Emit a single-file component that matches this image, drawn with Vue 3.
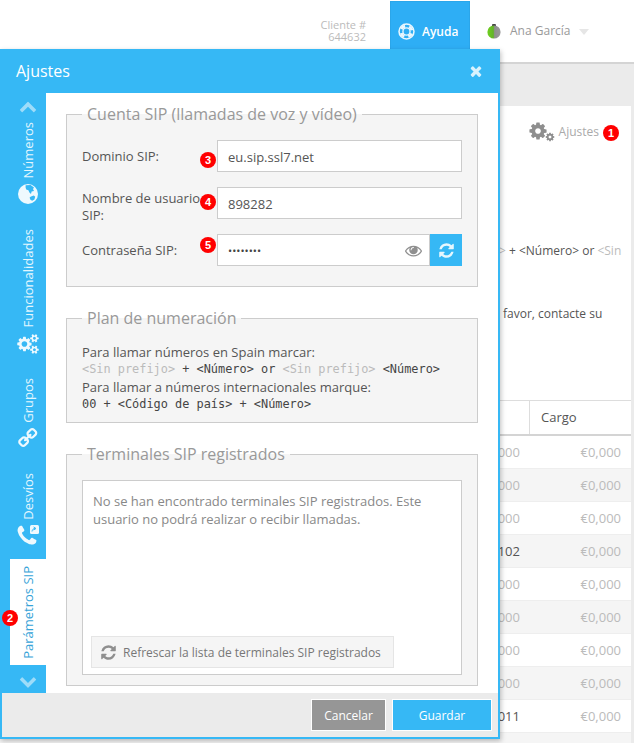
<script setup>
const rows = ['000','000','000','102','000','000','000','000','011']
const refresh = 'M1639 1056q0 5-1 7-64 268-268 434.5t-478 166.5q-146 0-282.5-55t-243.5-157l-129 129q-19 19-45 19t-45-19-19-45v-448q0-26 19-45t45-19h448q26 0 45 19t19 45-19 45l-137 137q71 66 161 102t187 36q134 0 250-65t186-179q11-17 53-117 8-23 30-23h192q13 0 22.5 9.5t9.5 22.5zm25-800v448q0 26-19 45t-45 19h-448q-26 0-45-19t-19-45 19-45l138-138q-148-137-349-137-134 0-250 65t-186 179q-11 17-53 117-8 23-30 23h-199q-13 0-22.5-9.5t-9.5-22.5v-7q65-268 270-434.5t480-166.5q146 0 284 55.5t245 156.5l130-129q19-19 45-19t45 19 19 45z'
const cog = 'M1152 896q0-106-75-181t-181-75-181 75-75 181 75 181 181 75 181-75 75-181zm512-109v222q0 12-8 23t-20 13l-185 28q-19 54-39 91 35 50 107 138 10 12 10 25t-9 23q-27 37-99 108t-94 71q-12 0-26-9l-138-108q-44 23-91 38-16 136-29 186-7 28-36 28h-222q-14 0-24.5-8.5t-11.5-21.5l-28-184q-49-16-90-37l-141 107q-10 9-25 9-14 0-25-11-126-114-165-168-7-10-7-23 0-12 8-23 15-21 51-66.5t54-70.5q-27-50-41-99l-183-27q-13-2-21-12.5t-8-23.5v-222q0-12 8-23t19-13l186-28q14-46 39-92-40-57-107-138-10-12-10-24 0-10 9-23 26-36 98.5-107.5t94.5-71.5q13 0 26 10l138 107q44-23 91-38 16-136 29-186 7-28 36-28h222q14 0 24.5 8.5t11.5 21.5l28 184q49 16 90 37l142-107q9-9 24-9 13 0 25 10 129 119 165 170 7 8 7 22 0 12-8 23-15 21-51 66.5t-54 70.5q26 50 41 98l183 28q13 2 21 12.5t8 23.5z'
</script>

<template>
  <div class="page">
    <header class="top">
      <div class="client">Cliente #<br />644632</div>
      <div class="help">
        <svg class="ring" viewBox="0 0 20 20" width="17" height="17">
          <circle cx="10" cy="10" r="8.8" fill="none" stroke="#eaf7fe" stroke-width="1.8" />
          <circle cx="10" cy="10" r="4.2" fill="none" stroke="#eaf7fe" stroke-width="1.6" />
          <circle cx="10" cy="10" r="6.5" fill="none" stroke="#eaf7fe" stroke-width="3.4" stroke-dasharray="5.2 5" stroke-dashoffset="-2.5" />
        </svg>
        <span>Ayuda</span>
      </div>
      <div class="user">
        <svg class="ball" viewBox="0 0 16 16" width="16" height="16">
          <defs>
            <linearGradient id="ballg" x1="0" x2="1" y1="0" y2="0">
              <stop offset="0" stop-color="#6fd01e" />
              <stop offset=".45" stop-color="#63b32a" />
              <stop offset=".55" stop-color="#8f8f8f" />
              <stop offset="1" stop-color="#9a9a9a" />
            </linearGradient>
          </defs>
          <path d="M6.4 1h3.2l.6 2.4H5.8z" fill="#444" />
          <circle cx="8" cy="9" r="6.6" fill="url(#ballg)" />
        </svg>
        <span>Ana García</span>
        <i class="caret"></i>
      </div>
    </header>

    <main class="card">
      <div class="settings-link">
        <svg class="cogs" viewBox="0 0 26 20" width="26" height="20">
          <svg x="-1" y="-1" width="20" height="20" viewBox="0 0 1792 1792"><path :d="cog" fill="#8e8e8e" /></svg>
          <svg x="16" y="10" width="10" height="10" viewBox="0 0 1792 1792"><path :d="cog" fill="#8e8e8e" /></svg>
        </svg>
        <span>Ajustes</span>
        <b class="badge">1</b>
      </div>
      <p class="bg-a"><span>&gt;</span> + &lt;Número&gt; or <span>&lt;Sin</span></p>
      <p class="bg-b">favor, contacte su</p>
      <div class="table">
        <div class="thead"><div class="c1"></div><div class="c2">Cargo</div></div>
        <div v-for="(r, i) in rows" :key="i" class="trow">
          <div class="c1" :class="{ dark: r !== '000' }">{{ r }}</div>
          <div class="c2">€0,000</div>
        </div>
        <div class="trow"></div>
      </div>
    </main>

    <section class="modal">
      <div class="m-head">
        <span>Ajustes</span>
        <svg viewBox="0 0 1792 1792" width="16" height="16"><path fill="#d9f2fd" d="M1490 1322q0 40-28 68l-136 136q-28 28-68 28t-68-28l-294-294-294 294q-28 28-68 28t-68-28l-136-136q-28-28-28-68t28-68l294-294-294-294q-28-28-28-68t28-68l136-136q28-28 68-28t68 28l294 294 294-294q28-28 68-28t68 28l136 136q28 28 28 68t-28 68l-294 294 294 294q28 28 28 68z" /></svg>
      </div>
      <div class="m-body">
        <nav class="rail">
          <svg class="chev up" viewBox="0 0 1792 1792" width="18" height="18"><path fill="#9edcf9" d="M1683 1331l-166 165q-19 19-45 19t-45-19l-531-531-531 531q-19 19-45 19t-45-19l-166-165q-19-19-19-45.5t19-45.5l742-741q19-19 45-19t45 19l742 741q19 19 19 45.5t-19 45.5z" /></svg>

          <div class="tab t1">
            <span class="vtext">Números</span>
            <svg viewBox="0 0 20 20" width="20" height="20">
              <circle cx="10" cy="10" r="10" fill="#eef9fe" />
              <path fill="#36b8f5" d="M7.6 1.2l5-.2 3.4 2.4-1 1.6 1 2-2.4.4-.6 2.6-1.6-1.4-1-2.4-2.2-.6-.6-2.2z" />
              <path fill="#36b8f5" d="M13 12.4l2.8-.8 1.4 1.2-.8 2.6-2.2 1.4-1.8-1-.8-2.2z" />
            </svg>
          </div>

          <div class="tab t2">
            <span class="vtext">Funcionalidades</span>
            <svg viewBox="0 0 1920 1792" width="22" height="20"><path fill="#eef9fe" d="M896 896q0-106-75-181t-181-75-181 75-75 181 75 181 181 75 181-75 75-181zm768 512q0-52-38-90t-90-38-90 38-38 90q0 53 37.5 90.5t90.5 37.5 90.5-37.5 37.5-90.5zm0-1024q0-52-38-90t-90-38-90 38-38 90q0 53 37.5 90.5t90.5 37.5 90.5-37.5 37.5-90.5zm-384 421v185q0 10-7 19.5t-16 10.5l-155 24q-11 35-32 76 34 48 90 115 7 11 7 20 0 12-7 19-23 30-82.5 89.5t-78.5 59.5q-11 0-21-7l-115-90q-37 19-77 31-11 108-23 155-7 24-30 24h-186q-11 0-20-7.5t-10-17.5l-23-153q-34-10-75-31l-118 89q-7 7-20 7-11 0-21-8-144-133-144-160 0-9 7-19 10-14 41-53t47-61q-23-44-35-82l-152-24q-10-1-17-9.5t-7-19.5v-185q0-10 7-19.5t16-10.5l155-24q11-35 32-76-34-48-90-115-7-11-7-20 0-12 7-20 22-30 82-89t79-59q11 0 21 7l115 90q34-18 77-32 11-108 23-154 7-24 30-24h186q11 0 20 7.5t10 17.5l23 153q34 10 75 31l118-89q8-7 20-7 11 0 21 8 144 133 144 160 0 8-7 19-12 16-42 54t-45 60q23 48 34 82l152 23q10 2 17 10.5t7 19.5zm640 533v140q0 16-149 31-12 27-30 52 51 113 51 138 0 4-4 7-122 71-124 71-8 0-46-47t-52-68q-20 2-30 2t-30-2q-14 21-52 68t-46 47q-2 0-124-71-4-3-4-7 0-25 51-138-18-25-30-52-149-15-149-31v-140q0-16 149-31 13-29 30-52-51-113-51-138 0-4 4-7 4-2 35-20t59-34 30-16q8 0 46 46.5t52 67.5q20-2 30-2t30 2q51-71 92-112l6-2q4 0 124 70 4 3 4 7 0 25-51 138 17 23 30 52 149 15 149 31zm0-1024v140q0 16-149 31-12 27-30 52 51 113 51 138 0 4-4 7-122 71-124 71-8 0-46-47t-52-68q-20 2-30 2t-30-2q-14 21-52 68t-46 47q-2 0-124-71-4-3-4-7 0-25 51-138-18-25-30-52-149-15-149-31v-140q0-16 149-31 13-29 30-52-51-113-51-138 0-4 4-7 4-2 35-20t59-34 30-16q8 0 46 46.5t52 67.5q20-2 30-2t30 2q51-71 92-112l6-2q4 0 124 70 4 3 4 7 0 25-51 138 17 23 30 52 149 15 149 31z" /></svg>
          </div>

          <div class="tab t3">
            <span class="vtext">Grupos</span>
            <svg viewBox="0 0 1792 1792" width="21" height="21"><path fill="#eef9fe" transform="rotate(-90 896 896)" d="M1520 1216q0-40-28-68l-208-208q-28-28-68-28-42 0-72 32 3 3 19 18.5t21.5 21.5 15 19 13 25.5 3.5 27.5q0 40-28 68t-68 28q-15 0-27.5-3.5t-25.5-13-19-15-21.5-21.5-18.5-19q-33 31-33 73 0 40 28 68l206 207q27 27 68 27 40 0 68-26l147-146q28-28 28-67zm-703-705q0-40-28-68l-206-207q-28-28-68-28-39 0-68 27l-147 146q-28 28-28 67 0 40 28 68l208 208q27 27 68 27 42 0 72-31-3-3-19-18.5t-21.5-21.5-15-19-13-25.5-3.5-27.5q0-40 28-68t68-28q15 0 27.5 3.5t25.5 13 19 15 21.5 21.5 18.5 19q33-31 33-73zm895 705q0 120-85 203l-147 146q-83 83-203 83-121 0-204-85l-206-207q-83-83-83-203 0-123 88-209l-88-88q-86 88-208 88-120 0-204-84l-208-208q-84-84-84-204t85-203l147-146q83-83 203-83 121 0 204 85l206 207q83 83 83 203 0 123-88 209l88 88q86-88 208-88 120 0 204 84l208 208q84 84 84 204z" /></svg>
          </div>

          <div class="tab t4">
            <span class="vtext">Desvíos</span>
            <svg viewBox="0 0 22 22" width="22" height="22">
              <svg x="-2" y="-1" width="24" height="24" viewBox="0 0 1792 1792"><path fill="#eef9fe" d="M1600 1240q0 27-10 70.5t-21 68.5q-21 50-122 106-94 51-186 51-27 0-53-3.5t-57.5-12.5-47-14.5-55.5-20.5-49-18q-98-35-175-83-127-79-264-216t-216-264q-48-77-83-175-3-9-18-49t-20.5-55.5-14.5-47-12.5-57.5-3.5-53q0-92 51-186 56-101 106-122 25-11 68.5-21t70.5-10q14 0 21 3 18 6 53 76 11 19 30 54t35 63.5 31 53.5q3 4 17.5 25t21.5 35.5 7 28.5q0 20-28.5 50t-62 55-62 53-28.5 46q0 9 5 22.5t8.5 20.5 14 24 11.5 19q76 137 174 235t235 174q2 1 19 11.5t24 14 20.5 8.5 22.5 5q18 0 46-28.5t53-62 55-62 50-28.5q14 0 28.5 7t35.5 21.5 25 17.5q25 15 53.5 31t63.5 35 54 30q70 35 76 53 3 7 3 21z" /></svg>
              <rect x="13" y="0" width="9" height="9" rx="1.5" fill="#eef9fe" />
              <path d="M15 6.5c.3-2 1.4-3 3-3M16.6 2l2.4 1.5-2.4 1.5" fill="none" stroke="#36b8f5" stroke-width="1" />
            </svg>
          </div>

          <div class="tab active">
            <span class="vtext">Parámetros SIP</span>
            <b class="badge b2">2</b>
          </div>

          <svg class="chev down" viewBox="0 0 1792 1792" width="18" height="18"><path fill="#9edcf9" d="M1683 808l-742 741q-19 19-45 19t-45-19l-742-741q-19-19-19-45.5t19-45.5l166-165q19-19 45-19t45 19l531 531 531-531q19-19 45-19t45 19l166 165q19 19 19 45.5t-19 45.5z" /></svg>
        </nav>

        <div class="content">
          <fieldset class="fs f1">
            <legend>Cuenta SIP (llamadas de voz y vídeo)</legend>
            <div class="row">
              <label>Dominio SIP:</label>
              <div class="field">eu.sip.ssl7.net</div>
              <b class="badge bf b3">3</b>
            </div>
            <div class="row">
              <label class="two">Nombre de usuario SIP:</label>
              <div class="field">898282</div>
              <b class="badge bf b4">4</b>
            </div>
            <div class="row">
              <label>Contraseña SIP:</label>
              <div class="field pw">
                <span class="dots">••••••••</span>
                <svg viewBox="0 0 1792 1792" width="17" height="17"><path fill="#8f8f8f" d="M1664 960q-152-236-381-353 61 104 61 225 0 185-131.5 316.5t-316.5 131.5-316.5-131.5-131.5-316.5q0-121 61-225-229 117-381 353 133 205 333.5 326.5t434.5 121.5 434.5-121.5 333.5-326.5zm-720-384q0-20-14-34t-34-14q-125 0-214.5 89.5t-89.5 214.5q0 20 14 34t34 14 34-14 14-34q0-86 61-147t147-61q20 0 34-14t14-34zm848 384q0 34-20 69-140 230-376.5 368.5t-499.5 138.5-499.5-139-376.5-368q-20-35-20-69t20-69q140-229 376.5-368t499.5-139 499.5 139 376.5 368q20 35 20 69z" /></svg>
              </div>
              <div class="gen">
                <svg viewBox="0 0 1792 1792" width="17" height="17"><path fill="#e6f7fe" :d="refresh" /></svg>
              </div>
              <b class="badge bf b5">5</b>
            </div>
          </fieldset>

          <fieldset class="fs f2">
            <legend>Plan de numeración</legend>
            <div class="plan">
              <div>Para llamar números en Spain marcar:</div>
              <div class="mono"><span>&lt;Sin prefijo&gt;</span> + &lt;Número&gt; or <span>&lt;Sin prefijo&gt;</span> &lt;Número&gt;</div>
              <div>Para llamar a números internacionales marque:</div>
              <div class="mono">00 + &lt;Código de país&gt; + &lt;Número&gt;</div>
            </div>
          </fieldset>

          <fieldset class="fs f3">
            <legend>Terminales SIP registrados</legend>
            <div class="box">
              <p>No se han encontrado terminales SIP registrados. Este usuario no podrá realizar o recibir llamadas.</p>
              <div class="refresh">
                <svg viewBox="0 0 1792 1792" width="17" height="17"><path fill="#8f8f8f" :d="refresh" /></svg>
                <span>Refrescar la lista de terminales SIP registrados</span>
              </div>
            </div>
          </fieldset>
        </div>
      </div>
      <div class="m-foot">
        <button class="cancel">Cancelar</button>
        <button class="save">Guardar</button>
      </div>
    </section>
  </div>
</template>

<style scoped>
.page {
  position: relative;
  width: 634px;
  height: 743px;
  overflow: hidden;
  background: #ebebeb;
  font-family: "Open Sans", sans-serif;
  font-size: 13px;
  color: #555;
}
.top {
  height: 62px;
  background: #fff;
  border-bottom: 2px solid #d4d4d4;
  display: flex;
  align-items: flex-start;
  justify-content: flex-end;
}
.client {
  margin-top: 19px;
  margin-right: 24px;
  text-align: right;
  font-size: 11px;
  line-height: 12px;
  color: #bbb;
}
.help {
  width: 80px;
  height: 61px;
  margin-top: 1px;
  box-sizing: border-box;
  background: #2eaef5;
  border: 1px solid #2ba6ea;
  display: flex;
  align-items: flex-start;
  padding: 21px 0 0 7px;
  gap: 7px;
  color: #fff;
  font-size: 12px;
  font-weight: 600;
  line-height: 17px;
}
.help .ring { flex: none; }
.user {
  width: 164px;
  display: flex;
  align-items: center;
  height: 17px;
  margin-top: 22px;
  padding-left: 16px;
  box-sizing: border-box;
  font-size: 12px;
  color: #999;
}
.ball { margin-right: 8px; flex: none; }
.caret {
  width: 0;
  height: 0;
  margin-left: 9px;
  margin-top: 2px;
  border: 5px solid transparent;
  border-top: 6px solid #e6e6e6;
  border-bottom: 0;
}
.card {
  position: absolute;
  top: 106px;
  left: 0;
  width: 631px;
  height: 637px;
  background: #fff;
}
.settings-link {
  position: absolute;
  right: 12px;
  top: 16px;
  display: flex;
  align-items: center;
  font-size: 12px;
  line-height: 20px;
  color: #aaa;
}
.cogs { margin-right: 4px; }
.badge {
  width: 16px;
  height: 16px;
  border-radius: 50%;
  background: #f00;
  color: #fff;
  font-family: "Liberation Sans", Arial, sans-serif;
  font-size: 11px;
  font-weight: 700;
  line-height: 16px;
  text-align: center;
  flex: none;
}
.settings-link .badge { margin-left: 4px; margin-top: 2px; }
.bg-a, .bg-b {
  position: absolute;
  margin: 0;
  font-size: 12px;
  line-height: 17px;
  color: #555;
  white-space: nowrap;
}
.bg-a { top: 136px; left: 499px; }
.bg-a span { color: #bbb; }
.bg-b { top: 199px; left: 503px; }
.table {
  position: absolute;
  top: 294px;
  left: 0;
  right: 0;
  border-top: 1px solid #ddd;
}
.thead {
  height: 33px;
  display: flex;
  border-bottom: 2px solid #d4d4d4;
  line-height: 32px;
}
.thead .c1 { border-right: 1px solid #ddd; box-sizing: border-box; }
.thead .c2 { text-align: left; padding: 0 0 0 11px; color: #555; }
.trow {
  height: 32px;
  display: flex;
  align-items: center;
  border-bottom: 1px solid #eee;
  color: #bbb;
}
.trow:nth-child(odd) { background: #f5f5f5; }
.c1 { width: 530px; text-align: right; padding-right: 10px; box-sizing: border-box; }
.c1.dark { color: #555; }
.c2 { flex: 1; text-align: right; padding-right: 10px; }

.modal {
  position: absolute;
  left: 0;
  top: 49px;
  width: 500px;
  height: 690px;
  box-sizing: border-box;
  background: #36b8f5;
  border: 2px solid #36b8f5;
  border-top: 0;
  box-shadow: 1px 2px 5px rgba(0, 0, 0, .25);
  display: flex;
  flex-direction: column;
}
.m-head {
  height: 44px;
  flex: none;
  margin: 0 0 0 -2px;
  padding: 0 14px 0 16px;
  display: flex;
  align-items: center;
  justify-content: space-between;
  color: #fff;
  font-size: 16px;
}
.m-body { flex: 1; display: flex; min-height: 0; margin-left: -2px; }
.rail {
  width: 46px;
  flex: none;
  box-sizing: border-box;
  padding-left: 10px;
  background: #36b8f5;
  display: flex;
  flex-direction: column;
  align-items: stretch;
  position: relative;
}
.chev { align-self: center; flex: none; margin-left: -1px; }
.chev.up { margin-top: 4px; }
.chev.down { margin-top: 7px; }
.tab {
  display: flex;
  flex-direction: column;
  align-items: center;
  color: #e3f6fe;
  font-size: 13px;
}
.vtext {
  writing-mode: vertical-rl;
  transform: rotate(180deg);
  line-height: 20px;
  white-space: nowrap;
}
.tab svg { margin-top: 6px; flex: none; }
.t1 { margin-top: 7px; }
.t2 { margin-top: 25px; }
.t3 { margin-top: 24px; }
.t3 svg { margin-top: 4px; }
.t4 { margin-top: 25px; }
.active {
  margin-top: 12px;
  height: 106px;
  background: #fff;
  color: #36a3d8;
  justify-content: center;
  position: relative;
}
.b2 { position: absolute; left: -8px; top: 51px; }

.content {
  flex: 1;
  min-width: 0;
  background: #fff;
  padding: 9px 20px 0;
  box-sizing: border-box;
}
.fs {
  margin: 0;
  padding: 0 15px;
  border: 1px solid #ccc;
  background: #f5f5f5;
  box-sizing: border-box;
  min-width: 0;
}
.fs legend {
  margin-left: 0;
  padding: 0 5px;
  font-size: 16px;
  line-height: 24px;
  color: #999;
}
.f1 { height: 185px; padding-top: 14px; }
.f2 { height: 117px; margin-top: 19px; padding-top: 14px; }
.f3 { height: 244px; margin-top: 19px; padding-top: 14px; }
.row {
  position: relative;
  display: flex;
  height: 32px;
  margin-bottom: 15px;
}
.row label {
  width: 135px;
  flex: none;
  padding-top: 8px;
  line-height: 17px;
  box-sizing: border-box;
}
.row label.two { padding-top: 3px; width: 125px; margin-right: 10px; }
.field {
  flex: 1;
  min-width: 0;
  box-sizing: border-box;
  border: 1px solid #ccc;
  background: #fff;
  padding: 0 10px;
  line-height: 32px;
  font-size: 13px;
}
.field.pw {
  display: flex;
  align-items: center;
  justify-content: space-between;
  padding-right: 7px;
}
.dots { font-size: 11px; letter-spacing: 0; color: #444; margin-top: 1px; }
.gen {
  width: 32px;
  flex: none;
  background: #36b8f5;
  display: flex;
  align-items: center;
  justify-content: center;
}
.bf { position: absolute; left: 118px; }
.b3 { top: 12px; }
.b4 { top: 7px; }
.b5 { top: 3px; }
.plan { line-height: 17.4px; font-size: 13px; }
.mono { font-family: "DejaVu Sans Mono", monospace; font-size: 11.9px; color: #444; }
.mono span { color: #bbb; }
.box {
  position: relative;
  height: 195px;
  box-sizing: border-box;
  background: #fff;
  border: 1px solid #ccc;
  padding: 11px 10px;
  color: #888;
}
.box p { margin: 0; line-height: 18px; font-size: 13px; }
.refresh {
  position: absolute;
  left: 8px;
  bottom: 6px;
  width: 303px;
  height: 32px;
  box-sizing: border-box;
  background: #f5f5f5;
  border: 1px solid #e5e5e5;
  display: flex;
  align-items: center;
  padding-left: 8px;
  gap: 6px;
  color: #777;
  font-size: 12px;
  white-space: nowrap;
}
.m-foot {
  height: 44px;
  flex: none;
  background: #ebebeb;
  display: flex;
  justify-content: flex-end;
  align-items: center;
  gap: 6px;
  padding-right: 6px;
}
.m-foot button {
  height: 32px;
  border: 1px solid;
  font-family: "Open Sans", sans-serif;
  font-size: 12px;
  color: #fff;
  padding: 0;
}
.cancel { width: 75px; background: #969696; border-color: #8a8a8a; }
.save { width: 100px; background: #36b8f5; border-color: #2ea8e2; }
</style>
